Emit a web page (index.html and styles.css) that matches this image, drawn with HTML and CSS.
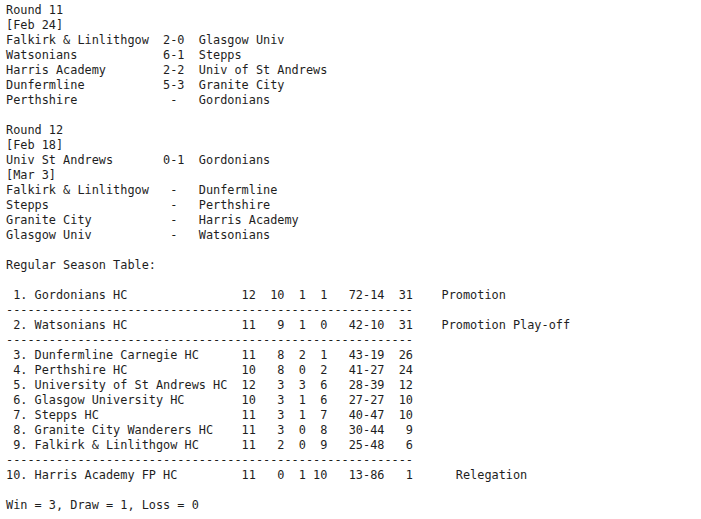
FILE: index.html
```html
<!DOCTYPE html>
<html>
<head>
<meta charset="utf-8">
<link rel="stylesheet" href="styles.css">
</head>
<body>
<pre class="results">Round 11
[Feb 24]
Falkirk &amp; Linlithgow  2-0  Glasgow Univ
Watsonians            6-1  Stepps
Harris Academy        2-2  Univ of St Andrews
Dunfermline           5-3  Granite City
Perthshire             -   Gordonians

Round 12
[Feb 18]
Univ St Andrews       0-1  Gordonians
[Mar 3]
Falkirk &amp; Linlithgow   -   Dunfermline
Stepps                 -   Perthshire
Granite City           -   Harris Academy
Glasgow Univ           -   Watsonians

Regular Season Table:

 1. Gordonians HC                12  10  1  1   72-14  31    Promotion
---------------------------------------------------------
 2. Watsonians HC                11   9  1  0   42-10  31    Promotion Play-off
---------------------------------------------------------
 3. Dunfermline Carnegie HC      11   8  2  1   43-19  26
 4. Perthshire HC                10   8  0  2   41-27  24
 5. University of St Andrews HC  12   3  3  6   28-39  12
 6. Glasgow University HC        10   3  1  6   27-27  10
 7. Stepps HC                    11   3  1  7   40-47  10
 8. Granite City Wanderers HC    11   3  0  8   30-44   9
 9. Falkirk &amp; Linlithgow HC      11   2  0  9   25-48   6
---------------------------------------------------------
10. Harris Academy FP HC         11   0  1 10   13-86   1      Relegation

Win = 3, Draw = 1, Loss = 0</pre>
</body>
</html>
```
FILE: styles.css
```css
html, body {
  margin: 0;
  padding: 0;
  background: #ffffff;
}

.results {
  margin: 0;
  padding: 3px 0 0 6px;
  font-family: "DejaVu Sans Mono", "Liberation Mono", monospace;
  font-size: 11.86px;
  line-height: 15px;
  color: #1e1e1e;
}
```
